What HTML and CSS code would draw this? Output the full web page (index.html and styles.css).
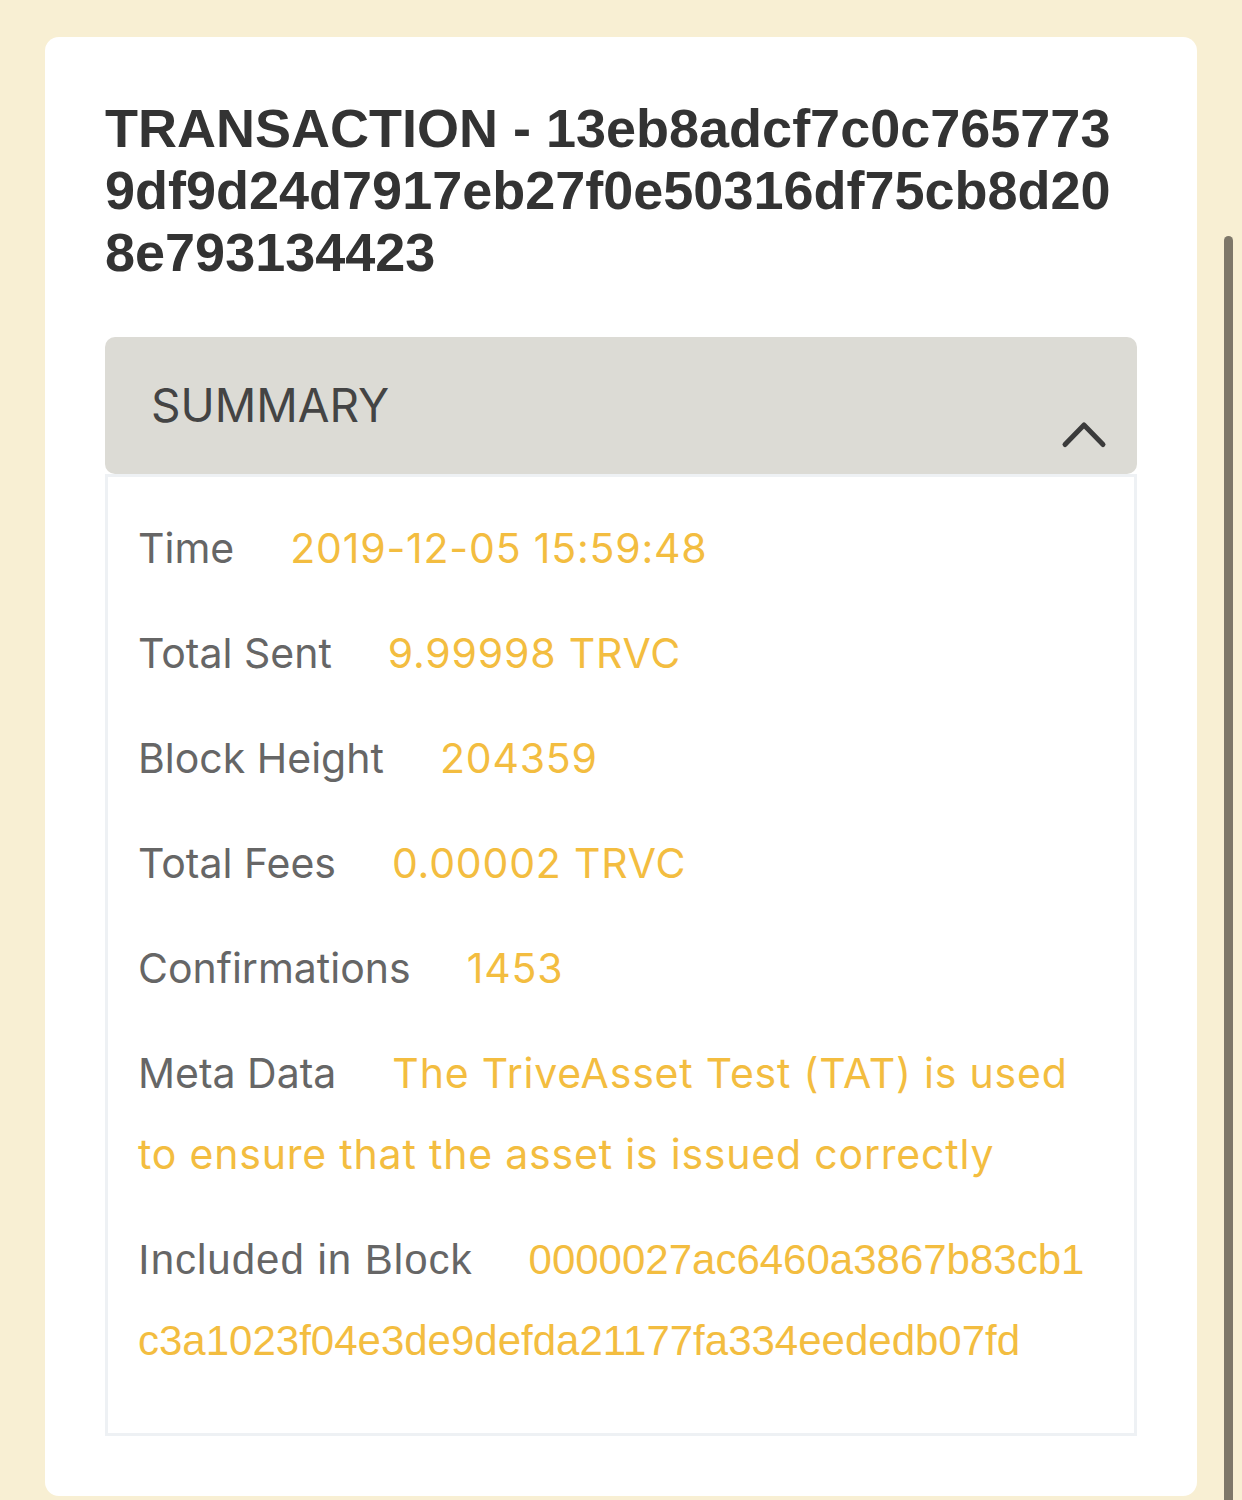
FILE: index.html
```html
<!DOCTYPE html>
<html lang="en">
<head>
  <meta charset="UTF-8">
  <meta name="viewport" content="width=device-width, initial-scale=1.0">
  <title>Transaction</title>
  <link rel="stylesheet" href="styles.css">
</head>
<body>

<div class="card">
  <h1 class="tx-title">TRANSACTION - 13eb8adcf7c0c7657739df9d24d7917eb27f0e50316df75cb8d208e793134423</h1>

  <div class="panel">
    <div class="panel-header">
      <span class="panel-title">SUMMARY</span>
      <svg class="chevron" width="48" height="30" viewBox="0 0 48 30">
        <path d="M5 24.5 L24 5 L43 24.5" fill="none" stroke="#3b3b3b" stroke-width="5" stroke-linecap="round" stroke-linejoin="round"/>
      </svg>
    </div>

    <div class="panel-body">
      <div class="row"><span class="label">Time</span><span class="value">2019-12-05 15:59:48</span></div>
      <div class="row"><span class="label">Total Sent</span><span class="value">9.99998 TRVC</span></div>
      <div class="row"><span class="label">Block Height</span><span class="value">204359</span></div>
      <div class="row"><span class="label">Total Fees</span><span class="value">0.00002 TRVC</span></div>
      <div class="row"><span class="label">Confirmations</span><span class="value">1453</span></div>
      <div class="row"><span class="label">Meta Data</span><span class="value">The TriveAsset Test (TAT) is used to ensure that the asset is issued correctly</span></div>
      <div class="row row-block"><span class="label">Included in Block</span><span class="value hash">0000027ac6460a3867b83cb1c3a1023f04e3de9defda21177fa334eededb07fd</span></div>
    </div>
  </div>
</div>

<!-- scroll indicator -->
<div class="scrollbar"></div>

</body>
</html>
```

FILE: styles.css
```css
* {
  box-sizing: border-box;
}

body {
  margin: 0;
  padding: 37px 45px 3px 45px;
  background-color: #f8efd3;
  font-family: "Liberation Sans", Arial, sans-serif;
}

.card {
  background-color: #fff;
  border-radius: 14px;
  padding: 60px;
}

.tx-title {
  margin: 0 0 54px 0;
  font-size: 54px;
  line-height: 62px;
  font-weight: bold;
  color: #333;
  word-break: break-all;
}

.panel-header {
  display: flex;
  justify-content: space-between;
  height: 137px;
  padding: 40px 29px 24px 46px;
  background-color: #dcdbd5;
  border-radius: 10px;
}

.panel-title {
  align-self: flex-start;
  font-family: Inter, "Noto Sans", sans-serif;
  font-size: 46px;
  line-height: 56px;
  color: #444;
}

.chevron {
  align-self: flex-end;
  display: block;
}

.panel-body {
  border: 3px solid #eef1f4;
  padding: 31px 32px 52px 30px;
}

.row {
  font-family: Inter, "Noto Sans", sans-serif;
  font-size: 41px;
  line-height: 81px;
  margin-bottom: 24px;
}

.row:last-child {
  margin-bottom: 0;
}

.label {
  color: #666;
}

.value {
  color: #f3bd40;
  margin-left: 56px;
  letter-spacing: 0.8px;
}

/* last row uses the plain helvetica look */
.row-block {
  font-family: "Liberation Sans", Arial, sans-serif;
  font-size: 42px;
}

.row-block .label {
  letter-spacing: 1px;
}

.row-block .value {
  letter-spacing: 0;
}

.hash {
  word-break: break-all;
}

.scrollbar {
  position: fixed;
  top: 236px;
  right: 9px;
  width: 9px;
  height: 1300px;
  border-radius: 5px;
  background-color: #7e7769;
}
```
